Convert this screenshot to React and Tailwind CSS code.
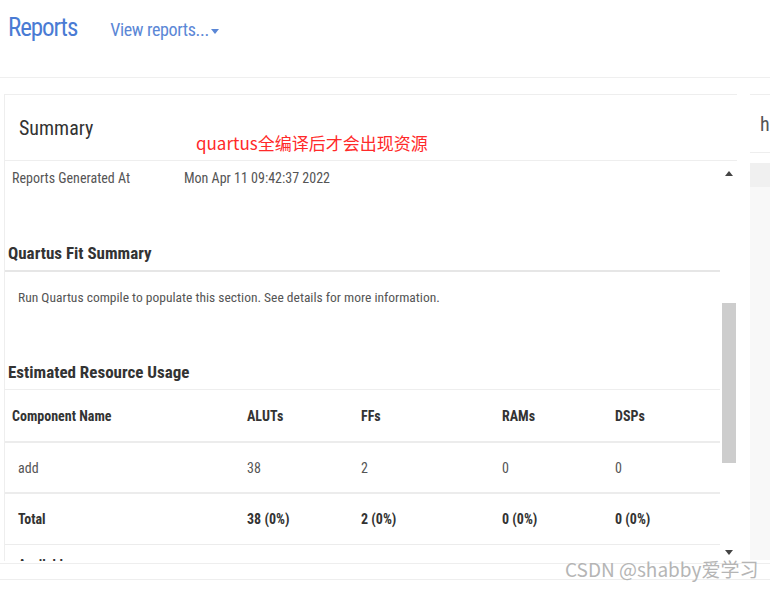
// Quartus HLS report viewer – Summary page.
const FONT = "font-['Liberation_Sans_Narrow','Roboto_Condensed','DejaVu_Sans_Condensed',sans-serif]";

const COLS = [
  { label: "Component Name", w: "w-[235px]" },
  { label: "ALUTs", w: "w-[114px]" },
  { label: "FFs", w: "w-[141px]" },
  { label: "RAMs", w: "w-[113px]" },
  { label: "DSPs", w: "flex-1" },
];

const ROWS = [
  { cells: ["add", "38", "2", "0", "0"], bold: false, h: "h-[51px] border-b-2 pt-[1px]" },
  { cells: ["Total", "38 (0%)", "2 (0%)", "0 (0%)", "0 (0%)"], bold: true, h: "h-[51px] border-b pt-[1px]" },
];

function ScrollBar() {
  return (
    <div className="relative ml-[2px] h-[400px] w-[15px]">
      <span className="absolute left-[3px] top-[10px] h-0 w-0 border-x-[4px] border-b-[5px] border-x-transparent border-b-[#444]" />
      <div className="absolute left-0 top-[142px] h-[160px] w-[14px] bg-[#cdcdcd]" />
      <span className="absolute left-[3px] top-[389px] h-0 w-0 border-x-[4px] border-t-[5px] border-x-transparent border-t-[#444]" />
    </div>
  );
}

export default function App() {
  return (
    <div className={`relative h-[589px] w-[770px] overflow-hidden bg-white ${FONT}`}>
      {/* page header */}
      <div className="flex h-[78px] items-start border-b border-[#efefef] pl-[8px] pt-[11px]">
        <span className="text-[25px] leading-[34px] tracking-[-1.1px] text-[#4a7bd4]">Reports</span>
        <span className="ml-[33px] mt-[4px] flex items-center text-[18px] leading-[30px] tracking-[-0.35px] text-[#5b87d6]">
          View reports...
          <span className="ml-[2px] mt-[2px] h-0 w-0 border-x-[4px] border-t-[5px] border-x-transparent border-t-[#5b87d6]" />
        </span>
      </div>

      <div className="mt-[16px] flex">
        {/* summary card */}
        <div className="ml-[4px] w-[733px] border-l border-t border-[#eeeeee]">
          <div className="flex h-[66px] items-center border-b border-[#eeeeee] pl-[14px] text-[20px] text-[#333]">
            Summary
          </div>
          <div className="flex">
            <div className="h-[400px] w-[716px] overflow-hidden">
              <div className="flex h-[34px] items-center pl-[7px] text-[14px] text-[#555]">
                <span className="w-[172px]">Reports Generated At</span>
                <span>Mon Apr 11 09:42:37 2022</span>
              </div>
              <div className="h-[44px]" />
              <div className="flex h-[33px] items-center border-b-2 border-[#e6e6e6] pb-[1px] pl-[3px] text-[17px] font-bold text-[#333]">
                Quartus Fit Summary
              </div>
              <div className="flex h-[50px] items-center pl-[13px] pt-[1px] text-[13.5px] text-[#555]">
                Run Quartus compile to populate this section. See details for more information.
              </div>
              <div className="h-[33px]" />
              <div className="flex h-[34px] items-center pl-[3px] pt-[1px] text-[17px] font-bold text-[#333]">
                Estimated Resource Usage
              </div>
              <div className="border-t border-[#eeeeee]">
                <div className="flex h-[53px] items-center border-b-2 border-[#ececec] pt-[1px] text-[14px] font-bold text-[#333]">
                  {COLS.map((c) => (
                    <span key={c.label} className={`${c.w} pl-[7px]`}>
                      {c.label}
                    </span>
                  ))}
                </div>
                {ROWS.map((r) => (
                  <div
                    key={r.cells[0]}
                    className={`flex items-center border-[#ececec] text-[14px] ${r.h} ${
                      r.bold ? "font-bold text-[#333]" : "text-[#555]"
                    }`}
                  >
                    {r.cells.map((v, i) => (
                      <span key={i} className={`${COLS[i].w} ${i === 0 ? "pl-[13px]" : "pl-[7px]"}`}>
                        {v}
                      </span>
                    ))}
                  </div>
                ))}
                <div className="flex h-[51px] items-start pl-[13px] pt-[10px] text-[14px] font-bold text-[#333]">
                  Available
                </div>
              </div>
            </div>
            <ScrollBar />
          </div>
        </div>

        {/* next card, mostly off-screen */}
        <div className="ml-[13px] flex-1 border-t border-[#eeeeee]">
          <div className="flex h-[58px] items-center border-b border-[#eeeeee] pl-[10px] text-[20px] text-[#555]">
            h
          </div>
          <div className="mt-[10px] h-[24px] bg-[#f0f0f0]" />
          <div className="h-[373px] bg-[#f8f8f8]" />
        </div>
      </div>

      <div className="mt-[2px] border-t border-[#eeeeee]" />
      <div className="mt-[15px] border-t border-[#eeeeee]" />

      {/* annotation overlays */}
      <span className="absolute left-[196px] top-[131px] font-['Noto_Sans_CJK_SC',sans-serif] text-[17px] leading-[24px] text-[#ff2a2a]">
        quartus全编译后才会出现资源
      </span>
      <span className="absolute left-[565px] top-[556px] font-['Noto_Sans_CJK_SC',sans-serif] text-[19px] leading-[26px] text-[#b5b5b5]">
        CSDN @shabby爱学习
      </span>
    </div>
  );
}
